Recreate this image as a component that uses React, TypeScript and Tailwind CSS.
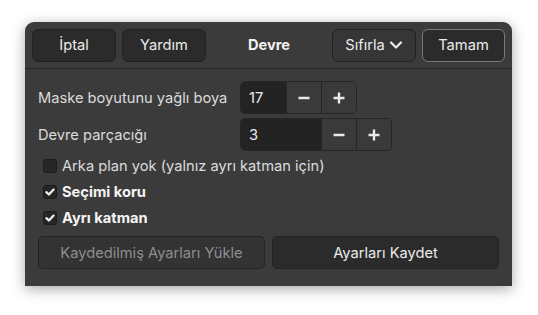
import React from "react";

function Check() {
  return (
    <svg viewBox="0 0 14 14" className="h-[14px] w-[14px]">
      <path d="M2.8 7.2 L5.7 10 L11.2 4.2" fill="none" stroke="#f2f2f2" strokeWidth="2.6" strokeLinecap="round" strokeLinejoin="round" />
    </svg>
  );
}

function CheckRow({ checked, label, bold }: { checked: boolean; label: string; bold?: boolean }) {
  return (
    <label className="flex h-[14px] items-center gap-[5px] pl-[5px]">
      <span className="flex h-[14px] w-[14px] items-center justify-center rounded-[3px] border border-[#1c1c1c] bg-[#262626]">
        {checked && <Check />}
      </span>
      <span className={bold ? "font-bold text-[#f4f4f4]" : "text-[#dcdcdc]"}>{label}</span>
    </label>
  );
}

function Spin({ value, entryWidth }: { value: string; entryWidth: string }) {
  return (
    <div className="flex h-[33px] overflow-hidden rounded-[5px] border border-[#262626]">
      <div className={`flex items-center bg-[#232323] pl-[8px] text-[#ececec] ${entryWidth}`}>{value}</div>
      <button className="flex w-[35px] items-center justify-center border-l border-[#262626] bg-[#3a3a3a]">
        <svg viewBox="0 0 14 14" className="h-[14px] w-[14px]">
          <path d="M1.5 7 H12.5" stroke="#e8e8e8" strokeWidth="2.4" />
        </svg>
      </button>
      <button className="flex w-[35px] items-center justify-center border-l border-[#262626] bg-[#3a3a3a]">
        <svg viewBox="0 0 14 14" className="h-[14px] w-[14px]">
          <path d="M1.5 7 H12.5 M7 1.5 V12.5" stroke="#e8e8e8" strokeWidth="2.4" />
        </svg>
      </button>
    </div>
  );
}

export default function App() {
  return (
    <div className="h-[315px] w-[538px] bg-white pl-[25px] pt-[22px]" style={{ fontFamily: "Inter, 'Noto Sans', sans-serif" }}>
      <div className="flex h-[264px] w-[487px] flex-col rounded-t-[9px] bg-[#3b3b3b] text-[14.67px] shadow-[0_3px_14px_rgba(0,0,0,0.35)]">
        <div className="flex h-[47px] items-center border-b border-[#242424] px-[7px]">
          <div className="flex gap-[6px]">
            <button className="h-[33px] w-[84px] rounded-[6px] border border-[#222] bg-[#2b2b2b] text-[#ececec]">İptal</button>
            <button className="h-[33px] w-[84px] rounded-[6px] border border-[#222] bg-[#2b2b2b] text-[#ececec]">Yardım</button>
          </div>
          <div className="flex-1 text-center font-bold text-[#f2f2f2]">Devre</div>
          <div className="flex gap-[6px]">
            <button className="flex h-[33px] w-[84px] items-center justify-center gap-[4px] rounded-[6px] border border-[#222] bg-[#363636] text-[#ececec]">
              Sıfırla
              <svg viewBox="0 0 14 14" className="h-[14px] w-[14px]">
                <path d="M2 4.5 L7 9.5 L12 4.5" fill="none" stroke="#ececec" strokeWidth="2.2" strokeLinecap="round" strokeLinejoin="round" />
              </svg>
            </button>
            <button className="h-[33px] w-[83px] rounded-[6px] border border-[#7a7a7a] bg-[#2b2b2b] text-[#ececec]">Tamam</button>
          </div>
        </div>
        <div className="flex flex-1 flex-col px-[13px] pt-[12px]">
          <div className="flex items-center">
            <span className="w-[202px] text-[#dcdcdc]">Maske boyutunu yağlı boya</span>
            <Spin value="17" entryWidth="w-[45px]" />
          </div>
          <div className="mt-[4px] flex items-center">
            <span className="w-[202px] text-[#dcdcdc]">Devre parçacığı</span>
            <Spin value="3" entryWidth="w-[80px]" />
          </div>
          <div className="mt-[8px] flex flex-col gap-[12px]">
            <CheckRow checked={false} label="Arka plan yok (yalnız ayrı katman için)" />
            <CheckRow checked label="Seçimi koru" bold />
            <CheckRow checked label="Ayrı katman" bold />
          </div>
          <div className="mt-[11px] flex gap-[7px]">
            <button className="h-[33px] w-[227px] rounded-[5px] border border-[#232323] bg-[#333333] text-[#8e8e8e]">Kaydedilmiş Ayarları Yükle</button>
            <button className="h-[33px] w-[227px] rounded-[5px] border border-[#232323] bg-[#2b2b2b] text-[#ececec]">Ayarları Kaydet</button>
          </div>
        </div>
      </div>
    </div>
  );
}
